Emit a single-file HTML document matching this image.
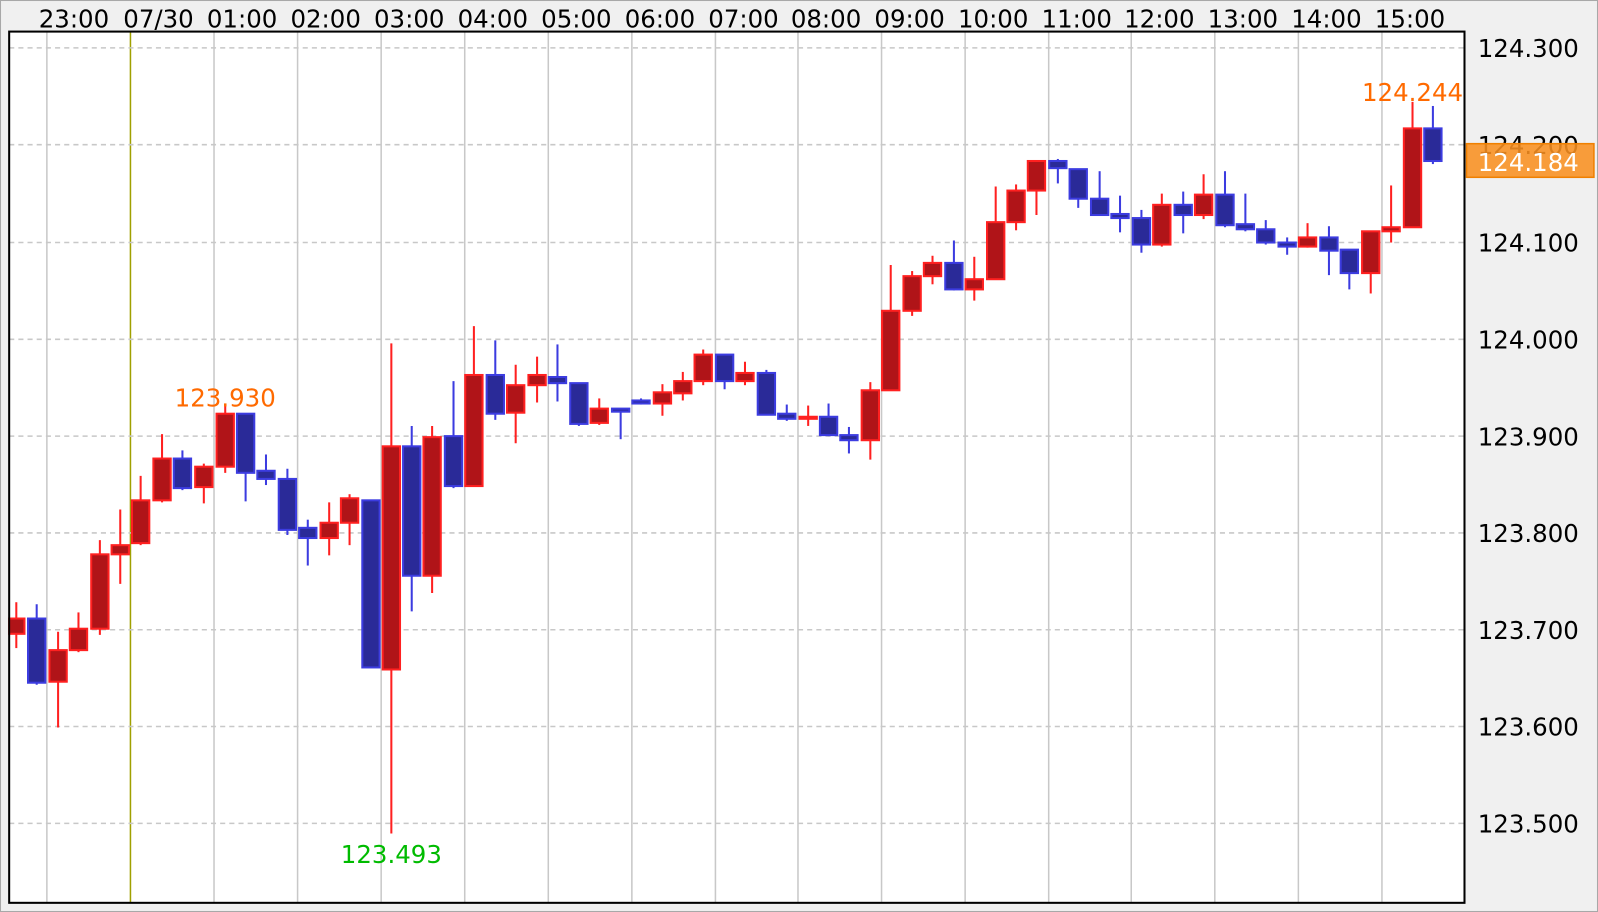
<!DOCTYPE html>
<html><head><meta charset="utf-8"><style>
html,body{margin:0;padding:0;background:#f0f0f0;}
svg{display:block;}
.u line{stroke:#ff2020;stroke-width:2}
.u rect{fill:#b01418;stroke:#ff2020;stroke-width:2}
.d line{stroke:#3c3ce0;stroke-width:2}
.d rect{fill:#2a2a98;stroke:#3c3ce0;stroke-width:2}
text{font-family:"DejaVu Sans","Liberation Sans",sans-serif;font-size:24px;}
</style></head><body>
<svg width="1598" height="912" viewBox="0 0 1568 895" preserveAspectRatio="none" xmlns="http://www.w3.org/2000/svg">
<rect x="0.5" y="0.5" width="1567" height="894" fill="#f0f0f0" stroke="#a8a8a8"/>
<rect x="9" y="31" width="1428" height="855" fill="#fff"/>
<g stroke="#c8c8c8" stroke-width="1.5">
<line x1="46" y1="31" x2="46" y2="886"/><line x1="210" y1="31" x2="210" y2="886"/><line x1="292" y1="31" x2="292" y2="886"/><line x1="374" y1="31" x2="374" y2="886"/><line x1="456" y1="31" x2="456" y2="886"/><line x1="538" y1="31" x2="538" y2="886"/><line x1="620" y1="31" x2="620" y2="886"/><line x1="702" y1="31" x2="702" y2="886"/><line x1="783" y1="31" x2="783" y2="886"/><line x1="865" y1="31" x2="865" y2="886"/><line x1="947" y1="31" x2="947" y2="886"/><line x1="1029" y1="31" x2="1029" y2="886"/><line x1="1110" y1="31" x2="1110" y2="886"/><line x1="1192" y1="31" x2="1192" y2="886"/><line x1="1274" y1="31" x2="1274" y2="886"/><line x1="1356" y1="31" x2="1356" y2="886"/>
</g>
<line x1="128" y1="31" x2="128" y2="886" stroke="#a0a000" stroke-width="1.5"/>
<g stroke="#c8c8c8" stroke-width="1.5" stroke-dasharray="5,4">
<line x1="9" y1="47" x2="1437" y2="47"/><line x1="9" y1="142" x2="1437" y2="142"/><line x1="9" y1="238" x2="1437" y2="238"/><line x1="9" y1="333" x2="1437" y2="333"/><line x1="9" y1="428" x2="1437" y2="428"/><line x1="9" y1="523" x2="1437" y2="523"/><line x1="9" y1="618" x2="1437" y2="618"/><line x1="9" y1="713" x2="1437" y2="713"/><line x1="9" y1="808" x2="1437" y2="808"/>
</g>
<g class="u"><line x1="16" y1="591" x2="16" y2="636"/><rect x="9" y="607" width="15" height="15"/></g>
<g class="d"><line x1="36" y1="593" x2="36" y2="672"/><rect x="27.5" y="607" width="17" height="63"/></g>
<g class="u"><line x1="57" y1="620" x2="57" y2="714"/><rect x="48.5" y="638" width="17" height="31"/></g>
<g class="u"><line x1="77" y1="601" x2="77" y2="640"/><rect x="68.5" y="617" width="17" height="21"/></g>
<g class="u"><line x1="98" y1="530" x2="98" y2="623"/><rect x="89.5" y="544" width="17" height="73"/></g>
<g class="u"><line x1="118" y1="500" x2="118" y2="573"/><rect x="109.5" y="535" width="17" height="9"/></g>
<g class="u"><line x1="138" y1="467" x2="138" y2="535"/><rect x="129.5" y="491" width="17" height="42"/></g>
<g class="u"><line x1="159" y1="426" x2="159" y2="493"/><rect x="150.5" y="450" width="17" height="41"/></g>
<g class="d"><line x1="179" y1="442" x2="179" y2="481"/><rect x="170.5" y="450" width="17" height="29"/></g>
<g class="u"><line x1="200" y1="455" x2="200" y2="494"/><rect x="191.5" y="458" width="17" height="20"/></g>
<g class="u"><line x1="221" y1="398" x2="221" y2="464"/><rect x="212.5" y="406" width="17" height="52"/></g>
<g class="d"><line x1="241" y1="406" x2="241" y2="492"/><rect x="232.5" y="406" width="17" height="58"/></g>
<g class="d"><line x1="261" y1="446" x2="261" y2="476"/><rect x="252.5" y="462" width="17" height="8"/></g>
<g class="d"><line x1="282" y1="460" x2="282" y2="525"/><rect x="273.5" y="470" width="17" height="50"/></g>
<g class="d"><line x1="302" y1="510" x2="302" y2="555"/><rect x="293.5" y="518" width="17" height="10"/></g>
<g class="u"><line x1="323" y1="493" x2="323" y2="545"/><rect x="314.5" y="513" width="17" height="15"/></g>
<g class="u"><line x1="343" y1="485" x2="343" y2="535"/><rect x="334.5" y="489" width="17" height="24"/></g>
<g class="d"><line x1="364" y1="491" x2="364" y2="655"/><rect x="355.5" y="491" width="17" height="164"/></g>
<g class="u"><line x1="384" y1="337" x2="384" y2="818"/><rect x="375.5" y="438" width="17" height="219"/></g>
<g class="d"><line x1="404" y1="418" x2="404" y2="600"/><rect x="395.5" y="438" width="17" height="127"/></g>
<g class="u"><line x1="424" y1="418" x2="424" y2="582"/><rect x="415.5" y="429" width="17" height="136"/></g>
<g class="d"><line x1="445" y1="374" x2="445" y2="479"/><rect x="436.5" y="428" width="17" height="49"/></g>
<g class="u"><line x1="465" y1="320" x2="465" y2="477"/><rect x="456.5" y="368" width="17" height="109"/></g>
<g class="d"><line x1="486" y1="334" x2="486" y2="412"/><rect x="477.5" y="368" width="17" height="38"/></g>
<g class="u"><line x1="506" y1="358" x2="506" y2="435"/><rect x="497.5" y="378" width="17" height="27"/></g>
<g class="u"><line x1="527" y1="350" x2="527" y2="395"/><rect x="518.5" y="368" width="17" height="10"/></g>
<g class="d"><line x1="547" y1="338" x2="547" y2="394"/><rect x="538.5" y="370" width="17" height="6"/></g>
<g class="d"><line x1="568" y1="376" x2="568" y2="418"/><rect x="559.5" y="376" width="17" height="40"/></g>
<g class="u"><line x1="588" y1="391" x2="588" y2="417"/><rect x="579.5" y="401" width="17" height="14"/></g>
<g class="d"><line x1="609" y1="401" x2="609" y2="431"/><rect x="600.5" y="401" width="17" height="3"/></g>
<g class="d"><line x1="629" y1="391" x2="629" y2="397"/><rect x="620.5" y="393" width="17" height="3"/></g>
<g class="u"><line x1="650" y1="377" x2="650" y2="408"/><rect x="641.5" y="385" width="17" height="11"/></g>
<g class="u"><line x1="670" y1="365" x2="670" y2="393"/><rect x="661.5" y="374" width="17" height="12"/></g>
<g class="u"><line x1="690" y1="343" x2="690" y2="378"/><rect x="681.5" y="348" width="17" height="26"/></g>
<g class="d"><line x1="711" y1="348" x2="711" y2="382"/><rect x="702.5" y="348" width="17" height="26"/></g>
<g class="u"><line x1="731" y1="355" x2="731" y2="378"/><rect x="722.5" y="366" width="17" height="8"/></g>
<g class="d"><line x1="752" y1="363" x2="752" y2="407"/><rect x="743.5" y="366" width="17" height="41"/></g>
<g class="d"><line x1="772" y1="397" x2="772" y2="413"/><rect x="763.5" y="406" width="17" height="5"/></g>
<g class="u"><line x1="793" y1="398" x2="793" y2="418"/><rect x="784.5" y="409" width="17" height="2"/></g>
<g class="d"><line x1="813" y1="396" x2="813" y2="428"/><rect x="804.5" y="409" width="17" height="18"/></g>
<g class="d"><line x1="833" y1="419" x2="833" y2="445"/><rect x="824.5" y="427" width="17" height="5"/></g>
<g class="u"><line x1="854" y1="375" x2="854" y2="451"/><rect x="845.5" y="383" width="17" height="49"/></g>
<g class="u"><line x1="874" y1="260" x2="874" y2="383"/><rect x="865.5" y="305" width="17" height="78"/></g>
<g class="u"><line x1="895" y1="266" x2="895" y2="310"/><rect x="886.5" y="271" width="17" height="34"/></g>
<g class="u"><line x1="915" y1="251" x2="915" y2="279"/><rect x="906.5" y="258" width="17" height="13"/></g>
<g class="d"><line x1="936" y1="236" x2="936" y2="285"/><rect x="927.5" y="258" width="17" height="26"/></g>
<g class="u"><line x1="956" y1="252" x2="956" y2="295"/><rect x="947.5" y="274" width="17" height="10"/></g>
<g class="u"><line x1="977" y1="183" x2="977" y2="274"/><rect x="968.5" y="218" width="17" height="56"/></g>
<g class="u"><line x1="997" y1="181" x2="997" y2="226"/><rect x="988.5" y="187" width="17" height="31"/></g>
<g class="u"><line x1="1017" y1="158" x2="1017" y2="211"/><rect x="1008.5" y="158" width="17" height="29"/></g>
<g class="d"><line x1="1038" y1="156" x2="1038" y2="180"/><rect x="1029.5" y="158" width="17" height="7"/></g>
<g class="d"><line x1="1058" y1="166" x2="1058" y2="204"/><rect x="1049.5" y="166" width="17" height="29"/></g>
<g class="d"><line x1="1079" y1="168" x2="1079" y2="211"/><rect x="1070.5" y="195" width="17" height="16"/></g>
<g class="d"><line x1="1099" y1="192" x2="1099" y2="228"/><rect x="1090.5" y="210" width="17" height="4"/></g>
<g class="d"><line x1="1120" y1="206" x2="1120" y2="248"/><rect x="1111.5" y="214" width="17" height="26"/></g>
<g class="u"><line x1="1140" y1="190" x2="1140" y2="242"/><rect x="1131.5" y="201" width="17" height="39"/></g>
<g class="d"><line x1="1161" y1="188" x2="1161" y2="229"/><rect x="1152.5" y="201" width="17" height="10"/></g>
<g class="u"><line x1="1181" y1="171" x2="1181" y2="215"/><rect x="1172.5" y="191" width="17" height="20"/></g>
<g class="d"><line x1="1202" y1="168" x2="1202" y2="223"/><rect x="1193.5" y="191" width="17" height="30"/></g>
<g class="d"><line x1="1222" y1="190" x2="1222" y2="227"/><rect x="1213.5" y="220" width="17" height="5"/></g>
<g class="d"><line x1="1242" y1="216" x2="1242" y2="240"/><rect x="1233.5" y="225" width="17" height="13"/></g>
<g class="d"><line x1="1263" y1="233" x2="1263" y2="250"/><rect x="1254.5" y="238" width="17" height="4"/></g>
<g class="u"><line x1="1283" y1="219" x2="1283" y2="243"/><rect x="1274.5" y="233" width="17" height="9"/></g>
<g class="d"><line x1="1304" y1="222" x2="1304" y2="270"/><rect x="1295.5" y="233" width="17" height="13"/></g>
<g class="d"><line x1="1324" y1="245" x2="1324" y2="284"/><rect x="1315.5" y="245" width="17" height="23"/></g>
<g class="u"><line x1="1345" y1="227" x2="1345" y2="288"/><rect x="1336.5" y="227" width="17" height="41"/></g>
<g class="u"><line x1="1365" y1="182" x2="1365" y2="238"/><rect x="1356.5" y="223" width="17" height="4"/></g>
<g class="u"><line x1="1386" y1="100" x2="1386" y2="223"/><rect x="1377.5" y="126" width="17" height="97"/></g>
<g class="d"><line x1="1406" y1="104" x2="1406" y2="161"/><rect x="1397.5" y="126" width="17" height="32"/></g>
<rect x="9" y="31" width="1428" height="855" fill="none" stroke="#000" stroke-width="2"/>
<g fill="#000">
<text x="38" y="27">23:00</text><text x="121" y="27">07/30</text><text x="203" y="27">01:00</text><text x="285" y="27">02:00</text><text x="367" y="27">03:00</text><text x="449" y="27">04:00</text><text x="531" y="27">05:00</text><text x="613" y="27">06:00</text><text x="695" y="27">07:00</text><text x="776" y="27">08:00</text><text x="858" y="27">09:00</text><text x="940" y="27">10:00</text><text x="1022" y="27">11:00</text><text x="1103" y="27">12:00</text><text x="1185" y="27">13:00</text><text x="1267" y="27">14:00</text><text x="1349" y="27">15:00</text>
</g>
<g fill="#000">
<text x="1450" y="56">124.300</text><text x="1450" y="151">124.200</text><text x="1450" y="247">124.100</text><text x="1450" y="342">124.000</text><text x="1450" y="437">123.900</text><text x="1450" y="532">123.800</text><text x="1450" y="627">123.700</text><text x="1450" y="722">123.600</text><text x="1450" y="817">123.500</text>
</g>
<rect x="1439" y="141" width="125" height="33" fill="#f89020" fill-opacity="0.88" stroke="#f08000" stroke-width="1.5"/>
<text x="1450" y="168" fill="#fff">124.184</text>
<text x="221" y="399" fill="#ff6a00" text-anchor="middle">123.930</text>
<text x="1386" y="99" fill="#ff6a00" text-anchor="middle">124.244</text>
<text x="384" y="847" fill="#00bb00" text-anchor="middle">123.493</text>
</svg>
</body></html>
